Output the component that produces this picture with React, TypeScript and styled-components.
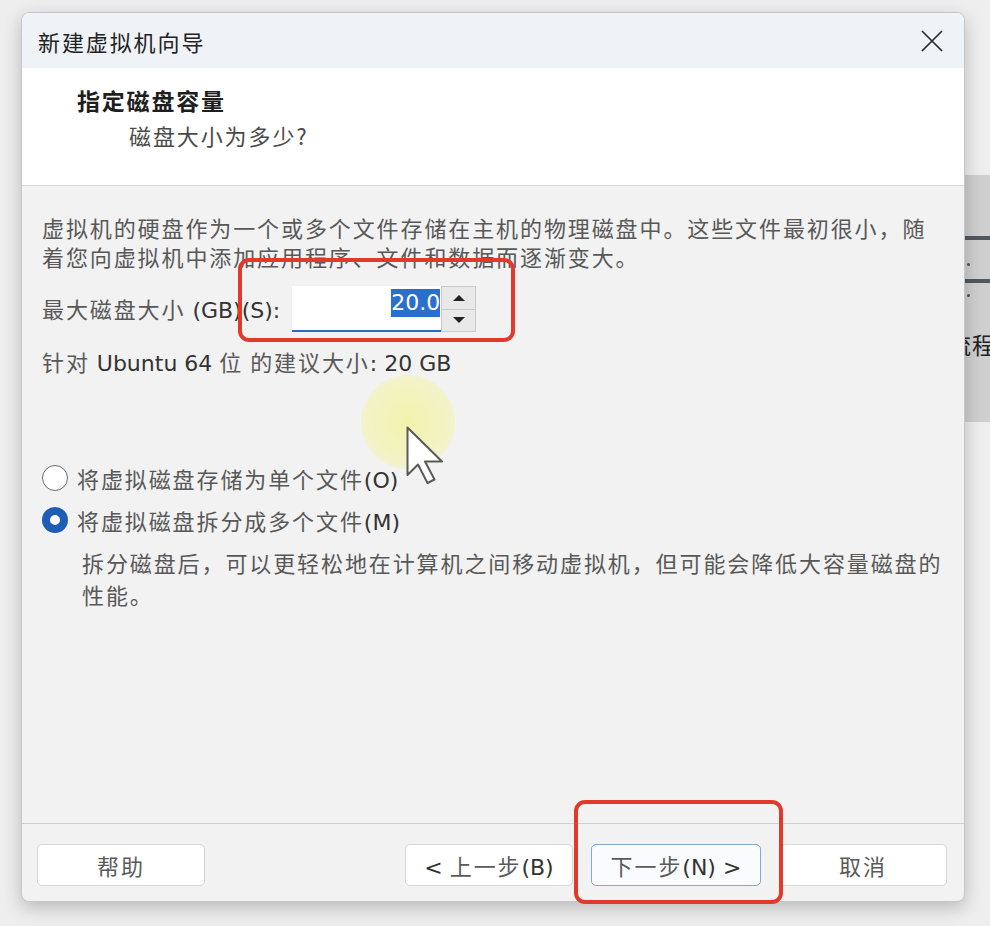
import React from 'react';
import styled, { createGlobalStyle } from 'styled-components';

const GlobalStyle = createGlobalStyle`
  html, body {
    margin: 0;
    padding: 0;
    background: #eeeeee;
  }
  body {
    font-family: "Noto Sans CJK SC", "Noto Sans", sans-serif;
  }
  * {
    box-sizing: border-box;
  }
`;

const Page = styled.div`
  position: relative;
  display: flex;
  align-items: flex-start;
  width: 990px;
  height: 926px;
  padding: 12px 0 0 21px;
  overflow: hidden;
`;

const Dialog = styled.div`
  position: relative;
  z-index: 1;
  flex: none;
  width: 944px;
  height: 890px;
  display: flex;
  flex-direction: column;
  background: #f2f2f2;
  border: 1px solid #c6c6c6;
  border-radius: 8px;
  overflow: hidden;
  box-shadow: 0 6px 18px rgba(0, 0, 0, 0.22);
`;

const TitleBar = styled.div`
  height: 55px;
  flex: none;
  display: flex;
  align-items: center;
  justify-content: space-between;
  padding: 0 21px 0 16px;
  background: #eff3f7;
`;

const TitleText = styled.div`
  font-size: 22px;
  letter-spacing: 1.9px;
  color: #222;
`;

const CloseButton = styled.div`
  width: 22px;
  height: 22px;
  display: flex;
  align-items: center;
  justify-content: center;
`;

const Header = styled.div`
  height: 118px;
  flex: none;
  padding: 17px 0 0 55px;
  background: #ffffff;
  border-bottom: 1px solid #d6d6d6;
`;

const HeaderTitle = styled.div`
  font-size: 23px;
  line-height: 30px;
  font-weight: 700;
  letter-spacing: 1.8px;
  color: #1e1e1e;
`;

const HeaderSub = styled.div`
  margin: 5px 0 0 52px;
  font-size: 22px;
  line-height: 30px;
  letter-spacing: 1.9px;
  color: #4a4a4a;
`;

const Body = styled.div`
  flex: 1;
  padding: 27px 20px 0 20px;
  font-size: 22px;
  letter-spacing: 1.9px;
  color: #585858;
`;

const Paragraph = styled.div`
  line-height: 29px;
  white-space: nowrap;
`;

const Lat = styled.span`
  font-family: "DejaVu Sans", "Noto Sans CJK SC", sans-serif;
  font-size: 22px;
  letter-spacing: 0;
  color: #333;
`;

const SizeRow = styled.div`
  margin-top: 15px;
  display: flex;
  align-items: center;
  height: 46px;
  gap: 12px;
`;

const SizeLabel = styled.div`
  line-height: 29px;
  white-space: nowrap;
`;

const SpinBox = styled.div`
  display: flex;
  align-items: stretch;
  height: 46px;
`;

const SpinField = styled.div`
  width: 149px;
  background: #ffffff;
  border-bottom: 2px solid #2f6cbc;
  display: flex;
  justify-content: flex-end;
  align-items: flex-start;
  padding: 3px 1px 0 0;
`;

const Selected = styled.span`
  font-family: "DejaVu Sans", sans-serif;
  font-size: 22px;
  line-height: 28px;
  letter-spacing: 0;
  color: #ffffff;
  background: #2b6fce;
`;

const SpinButtons = styled.div`
  width: 35px;
  display: flex;
  flex-direction: column;
  border: 1px solid #c9c9c9;
  background: #e9e9e9;
`;

const SpinHalf = styled.div<{ $top?: boolean }>`
  flex: 1;
  display: flex;
  align-items: center;
  justify-content: center;
  border-bottom: ${(p) => (p.$top ? '1px solid #c9c9c9' : 'none')};
`;

const Arrow = styled.div<{ $up?: boolean }>`
  width: 0;
  height: 0;
  border-left: 6px solid transparent;
  border-right: 6px solid transparent;
  ${(p) => (p.$up ? 'border-bottom: 6px solid #222;' : 'border-top: 6px solid #222;')}
`;

const Recommend = styled.div`
  margin-top: 15px;
  line-height: 29px;
  white-space: nowrap;
`;

const RadioGroup = styled.div`
  margin-top: 85px;
  display: flex;
  flex-direction: column;
  gap: 12px;
`;

const RadioRow = styled.div`
  display: flex;
  align-items: center;
  height: 30px;
  gap: 9px;
`;

const RadioDot = styled.div<{ $checked?: boolean }>`
  width: 26px;
  height: 26px;
  border-radius: 50%;
  background: #ffffff;
  border: ${(p) => (p.$checked ? '8px solid #1d5db5' : '1.5px solid #6a6a6a')};
`;

const RadioLabel = styled.div`
  white-space: nowrap;
`;

const Note = styled.div`
  margin: 11px 0 0 40px;
  line-height: 32px;
  white-space: nowrap;
`;

const Footer = styled.div`
  height: 78px;
  flex: none;
  display: flex;
  align-items: flex-start;
  gap: 18px;
  padding: 20px 17px 0 15px;
  border-top: 1px solid #d0d0d0;
`;

const Grow = styled.div`
  flex: 1;
`;

const FooterButton = styled.div<{ $primary?: boolean }>`
  width: ${(p) => (p.$primary ? '170px' : '168px')};
  height: 42px;
  display: flex;
  align-items: center;
  justify-content: center;
  background: ${(p) => (p.$primary ? '#f9fbfe' : '#ffffff')};
  border: ${(p) => (p.$primary ? '1.5px solid #86a7d3' : '1px solid #d6d6d6')};
  border-radius: 5px;
  font-size: 22px;
  letter-spacing: 1.9px;
  color: #5a5a5a;
  white-space: nowrap;
`;

const ButtonLabel = styled.span`
  white-space: pre;
`;

const Strip = styled.div`
  flex: 1;
  align-self: stretch;
  padding-top: 163px;
  overflow: hidden;
`;

const GrayPanel = styled.div`
  height: 247px;
  background: #cfcfcf;
  padding-top: 61px;
  display: flex;
  flex-direction: column;
`;

const PanelRule = styled.div<{ $gap?: number }>`
  height: 4px;
  margin-top: ${(p) => p.$gap ?? 0}px;
  background: #505860;
`;

const PanelDot = styled.div<{ $gap: number }>`
  width: 3px;
  height: 3px;
  margin: ${(p) => p.$gap}px 0 0 2px;
  border-radius: 50%;
  background: #555;
`;

const PanelGlyph = styled.div`
  margin: 30px 0 0 -17px;
  font-size: 23px;
  letter-spacing: 1px;
  color: #222;
  white-space: nowrap;
`;

const Annotation = styled.div<{ $x: number; $y: number; $w: number; $h: number }>`
  position: absolute;
  z-index: 3;
  left: ${(p) => p.$x}px;
  top: ${(p) => p.$y}px;
  width: ${(p) => p.$w}px;
  height: ${(p) => p.$h}px;
  border: 4px solid #e13a2b;
  border-radius: 11px;
  pointer-events: none;
`;

const Halo = styled.div`
  position: absolute;
  z-index: 2;
  left: 361px;
  top: 375px;
  width: 94px;
  height: 94px;
  border-radius: 50%;
  background: radial-gradient(circle, rgba(243, 243, 150, 0.75) 0%, rgba(243, 243, 160, 0.55) 60%, rgba(243, 243, 170, 0) 100%);
`;

const Pointer = styled.svg`
  position: absolute;
  z-index: 4;
  left: 406px;
  top: 426px;
`;

export default function App() {
  return (
    <>
      <GlobalStyle />
      <Page>
        <Dialog>
          <TitleBar>
            <TitleText>新建虚拟机向导</TitleText>
            <CloseButton>
              <svg width="22" height="22" viewBox="0 0 22 22">
                <path d="M1 1 L21 21 M21 1 L1 21" stroke="#2a2a2a" strokeWidth="1.7" fill="none" />
              </svg>
            </CloseButton>
          </TitleBar>

          <Header>
            <HeaderTitle>指定磁盘容量</HeaderTitle>
            <HeaderSub>磁盘大小为多少?</HeaderSub>
          </Header>

          <Body>
            <Paragraph>
              虚拟机的硬盘作为一个或多个文件存储在主机的物理磁盘中。这些文件最初很小，随
              <br />
              着您向虚拟机中添加应用程序、文件和数据而逐渐变大。
            </Paragraph>

            <SizeRow>
              <SizeLabel>
                最大磁盘大小<Lat> (GB)(S):</Lat>
              </SizeLabel>
              <SpinBox>
                <SpinField>
                  <Selected>20.0</Selected>
                </SpinField>
                <SpinButtons>
                  <SpinHalf $top>
                    <Arrow $up />
                  </SpinHalf>
                  <SpinHalf>
                    <Arrow />
                  </SpinHalf>
                </SpinButtons>
              </SpinBox>
            </SizeRow>

            <Recommend>
              针对<Lat> Ubuntu 64 </Lat>位<Lat> </Lat>的建议大小<Lat>: 20 GB</Lat>
            </Recommend>

            <RadioGroup>
              <RadioRow>
                <RadioDot />
                <RadioLabel>
                  将虚拟磁盘存储为单个文件<Lat>(O)</Lat>
                </RadioLabel>
              </RadioRow>
              <RadioRow>
                <RadioDot $checked />
                <RadioLabel>
                  将虚拟磁盘拆分成多个文件<Lat>(M)</Lat>
                </RadioLabel>
              </RadioRow>
            </RadioGroup>

            <Note>
              拆分磁盘后，可以更轻松地在计算机之间移动虚拟机，但可能会降低大容量磁盘的
              <br />
              性能。
            </Note>
          </Body>

          <Footer>
            <FooterButton>帮助</FooterButton>
            <Grow />
            <FooterButton>
              <ButtonLabel>
                <Lat>{'< '}</Lat>上一步<Lat>(B)</Lat>
              </ButtonLabel>
            </FooterButton>
            <FooterButton $primary>
              <ButtonLabel>
                下一步<Lat>{'(N) >'}</Lat>
              </ButtonLabel>
            </FooterButton>
            <FooterButton>取消</FooterButton>
          </Footer>
        </Dialog>

        <Strip>
          <GrayPanel>
            <PanelRule />
            <PanelDot $gap={23} />
            <PanelRule $gap={13} />
            <PanelDot $gap={11} />
            <PanelGlyph>流程</PanelGlyph>
          </GrayPanel>
        </Strip>

        <Annotation $x={238} $y={258} $w={277} $h={84} />
        <Annotation $x={574} $y={800} $w={209} $h={104} />

        <Halo />
        <Pointer width="40" height="60" viewBox="0 0 40 60">
          <path
            d="M1.5 1.5 L1.5 49 L12 38.5 L21.5 57 L28.5 53.5 L19 35.5 L36 35.5 Z"
            fill="#ffffff"
            stroke="#5a5a5a"
            strokeWidth="2"
            strokeLinejoin="round"
          />
        </Pointer>
      </Page>
    </>
  );
}
